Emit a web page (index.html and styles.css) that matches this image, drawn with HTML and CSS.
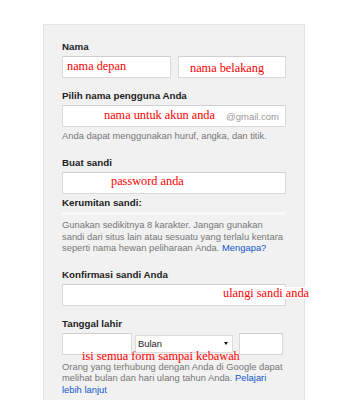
FILE: index.html
```html
<!DOCTYPE html>
<html lang="id">

<head>
    <meta charset="UTF-8">
    <meta name="viewport" content="width=device-width, initial-scale=1.0">
    <title>Buat Akun Google</title>
    <link rel="stylesheet" href="styles.css">
</head>

<body>
    <div class="panel">
        <div class="field">
            <label class="label">Nama</label>
            <div class="row">
                <input class="input" type="text">
                <input class="input" type="text">
            </div>
        </div>

        <div class="field">
            <label class="label">Pilih nama pengguna Anda</label>
            <div class="input suffixed">
                <span class="suffix">@gmail.com</span>
            </div>
            <p class="hint">Anda dapat menggunakan huruf, angka, dan titik.</p>
        </div>

        <div class="field">
            <label class="label">Buat sandi</label>
            <input class="input" type="password">
            <label class="label strength">Kerumitan sandi:</label>
            <div class="meter"></div>
            <p class="hint lines">Gunakan sedikitnya 8 karakter. Jangan gunakan<br>
                sandi dari situs lain atau sesuatu yang terlalu kentara<br>
                seperti nama hewan peliharaan Anda. <a href="#">Mengapa?</a></p>
        </div>

        <div class="field">
            <label class="label">Konfirmasi sandi Anda</label>
            <input class="input" type="password">
        </div>

        <div class="field">
            <label class="label">Tanggal lahir</label>
            <div class="date-row">
                <input class="input day" type="text">
                <div class="month">
                    <span>Bulan</span>
                    <span class="arrow"></span>
                </div>
                <input class="input year" type="text">
            </div>
            <p class="hint lines after-date">Orang yang terhubung dengan Anda di Google dapat<br>
                melihat bulan dan hari ulang tahun Anda. <a href="#">Pelajari</a><br>
                <a href="#">lebih lanjut</a></p>
        </div>

        <!-- catatan merah di atas form -->
        <span class="note note-first">nama depan</span>
        <span class="note note-last">nama belakang</span>
        <span class="note note-user">nama untuk akun anda</span>
        <span class="note note-pass">password anda</span>
        <span class="note note-confirm">ulangi sandi anda</span>
        <span class="note note-all">isi semua form sampai kebawah</span>
    </div>
</body>

</html>
```

FILE: styles.css
```css
body {
    margin: 0;
    background: #fff;
    font-family: "Liberation Sans", Arial, sans-serif;
    overflow: hidden;
}

.panel {
    position: relative;
    box-sizing: border-box;
    width: 262px;
    margin: 24px 0 0 43px;
    padding: 16px 18px 40px 18px;
    background: #f1f1f1;
    border: 1px solid #e5e5e5;
}

.field {
    margin-bottom: 12px;
}

.label {
    display: block;
    font-size: 9.75px;
    font-weight: bold;
    line-height: 12px;
    color: #222;
    margin-bottom: 3px;
}

.strength {
    margin-top: 3px;
}

.input {
    display: block;
    box-sizing: border-box;
    width: 100%;
    height: 22px;
    margin: 0;
    padding: 0;
    background: #fff;
    border: 1px solid #d9d9d9;
    border-top-color: #cfcfcf;
    border-radius: 1px;
    outline: none;
}

.row {
    display: flex;
    gap: 7px;
}

.row .input {
    flex: 1;
    min-width: 0;
}

.suffixed {
    display: flex;
    align-items: center;
    justify-content: flex-end;
    padding-right: 6px;
}

.suffix {
    font-size: 9.5px;
    color: #999;
}

.hint {
    margin: 3px 0 0 0;
    padding-bottom: 3px;
    font-size: 9.4px;
    line-height: 11.5px;
    color: #777;
}

.lines {
    white-space: nowrap;
}

.hint a {
    color: #15c;
    text-decoration: none;
}

.meter {
    height: 3px;
    margin: 3.5px 0 4px 0;
    background: #f9f9f9;
}

.date-row {
    display: flex;
    align-items: center;
}

.day {
    width: 70px;
    margin-right: 3px;
}

.year {
    width: 44px;
    margin-left: 6px;
}

.month {
    box-sizing: border-box;
    width: 98px;
    height: 18px;
    display: flex;
    align-items: center;
    justify-content: space-between;
    padding: 0 4px 0 2px;
    background: #fff;
    border: 1px solid #dcdcdc;
    font-size: 9.4px;
    color: #222;
}

.arrow {
    width: 0;
    height: 0;
    border-left: 2.5px solid transparent;
    border-right: 2.5px solid transparent;
    border-top: 3px solid #111;
}

.after-date {
    margin-top: 6px;
}

.note {
    position: absolute;
    font-family: "Liberation Serif", "Times New Roman", serif;
    font-size: 12.3px;
    line-height: 12px;
    color: #f00;
    white-space: nowrap;
}

.note-first {
    left: 23px;
    top: 35px;
}

.note-last {
    left: 146px;
    top: 37px;
}

.note-user {
    left: 60px;
    top: 84px;
}

.note-pass {
    left: 67px;
    top: 150px;
}

.note-confirm {
    left: 179px;
    top: 262px;
    background: #fff;
}

.note-all {
    left: 38px;
    top: 325px;
}
```
